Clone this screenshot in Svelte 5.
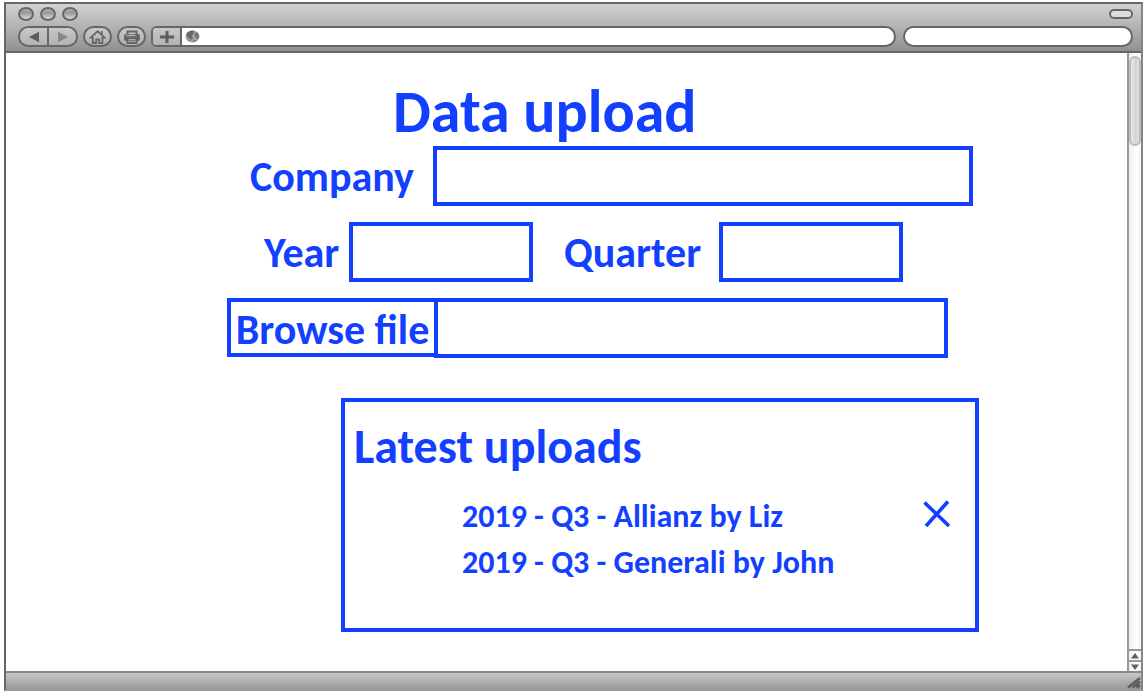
<script>
  let company = $state('');
  let year = $state('');
  let quarter = $state('');
  let file = $state('');
  const uploads = [
    { text: '2019 - Q3 - Allianz by Liz', removable: true },
    { text: '2019 - Q3 - Generali by John', removable: false }
  ];
</script>

<div class="page">
  <div class="window">
    <header class="chrome">
      <div class="titlebar">
        <div class="lights">
          <button class="light" aria-label="Close"></button>
          <button class="light" aria-label="Minimise"></button>
          <button class="light" aria-label="Zoom"></button>
        </div>
        <button class="pill" aria-label="Toggle toolbar"></button>
      </div>
      <nav class="toolbar" aria-label="Browser">
        <div class="history">
          <button class="tool" aria-label="Back">
            <svg width="12" height="12" viewBox="0 0 12 12"><path d="M1 6 11 .8v10.4z" fill="#5c5c5c" /></svg>
          </button>
          <button class="tool" aria-label="Forward">
            <svg width="12" height="12" viewBox="0 0 12 12"><path d="M11 6 1 .8v10.4z" fill="#888" /></svg>
          </button>
        </div>
        <button class="tool round" aria-label="Home">
          <svg width="17" height="16" viewBox="0 0 17 16" fill="none" stroke="#666" stroke-width="1.8">
            <path d="M3.800 8.600H1.800L8.600 2.200 15.600 8.600h-2.200M12.800 5.500V2M3.800 8v6h3.400v-3.700h2.800V14h3.400V8" />
          </svg>
        </button>
        <button class="tool round" aria-label="Print">
          <svg width="18" height="16" viewBox="0 0 18 16" fill="none">
            <path d="M4.500 6V2.500h9V6" stroke="#666" stroke-width="2" />
            <rect x="1" y="5" width="16" height="7" rx="2" fill="#666" />
            <path d="M3.500 6.500h9" stroke="#b0b0b0" stroke-width="1.400" />
            <rect x="4.500" y="9" width="9" height="5" fill="#aaa" stroke="#666" stroke-width="2" />
            <path d="M6 11.500h6" stroke="#777" />
          </svg>
        </button>
        <div class="address">
          <button class="tool add" aria-label="Add bookmark">
            <svg width="14" height="12" viewBox="0 0 14 12"><path d="M5.500 0h3v4.500H14v3H8.500V12h-3V7.500H0v-3h5.500z" fill="#5e5e5e" /></svg>
          </button>
          <svg class="globe" width="15" height="13" viewBox="0 0 15 13">
            <ellipse cx="7.500" cy="6.500" rx="7" ry="6" fill="#a2a2a2" />
            <path d="M1 4.500C2.500 1.500 5 .5 8 .5L9.500 2 8 3 8.500 4.500 6.500 6 8 8 6.500 10 5 8.500 3 8 2.500 6z" fill="#686868" />
            <path d="M10 3 12.500 2.500 14.200 5.500 13 9 11 8.200 9.800 5.500zM7.500 11 11.500 9.800 10 12z" fill="#737373" />
            <path d="M2 9 4.500 10 5 12z" fill="#777" />
          </svg>
          <input aria-label="Address" />
        </div>
        <input class="search" aria-label="Search" />
      </nav>
    </header>

    <div class="body">
      <main>
        <h1>Data upload</h1>
        <form onsubmit={(e) => e.preventDefault()}>
          <div class="row company">
            <label for="company">Company</label>
            <input id="company" class="box" bind:value={company} />
          </div>
          <div class="row period">
            <label for="year">Year</label>
            <input id="year" class="box" bind:value={year} />
            <label class="quarter" for="quarter">Quarter</label>
            <input id="quarter" class="box" bind:value={quarter} />
          </div>
          <div class="row browse">
            <button class="box" type="button">Browse file</button>
            <input class="box" aria-label="File" bind:value={file} />
          </div>
        </form>
        <section>
          <h2>Latest uploads</h2>
          <ul>
            {#each uploads as upload}
              <li>
                <span>{upload.text}</span>
                {#if upload.removable}
                  <button class="remove" aria-label="Remove upload">
                    <svg width="28" height="28" viewBox="0 0 28 28"><path d="M1.500 2.500 26 26M25 1.500 3 26" stroke="#133fff" stroke-width="3.600" /></svg>
                  </button>
                {/if}
              </li>
            {/each}
          </ul>
        </section>
      </main>
      <div class="scrollbar">
        <div class="track"><div class="thumb"></div></div>
        <button class="arrow" aria-label="Scroll up">
          <svg width="8" height="6" viewBox="0 0 8 6"><path d="M4 0 8 5.500H0z" fill="#606060" /></svg>
        </button>
        <button class="arrow" aria-label="Scroll down">
          <svg width="8" height="6" viewBox="0 0 8 6"><path d="M4 6 8 .5H0z" fill="#606060" /></svg>
        </button>
      </div>
    </div>

    <footer>
      <svg width="14" height="13" viewBox="0 0 14 13" stroke="#606060" stroke-width="2.800"><path d="M1 11.500 13 2M5.500 11.500 13 5.500M9.500 11.500 13 9" /></svg>
    </footer>
  </div>
</div>

<style>
  :global(body) {
    margin: 0;
    background: #fff;
  }
  .page, .page * {
    box-sizing: border-box;
  }
  .page {
    --blue: #133fff;
    --edge: #666;
    display: flex;
    min-height: 100vh;
    padding: 2px 5px 3px 4px;
    font-family: Carlito, Calibri, Lato, sans-serif;
    font-weight: 700;
    color: var(--blue);
  }
  button, input {
    margin: 0;
    padding: 0;
    border: 0;
    background: none;
    font: inherit;
    color: inherit;
    min-width: 0;
  }
  svg {
    display: block;
    flex: none;
  }
  .window {
    flex: 1;
    min-width: 0;
    display: flex;
    flex-direction: column;
    border: 2px solid var(--edge);
    border-right-color: #858585;
    border-bottom-color: #999;
  }
  .chrome {
    padding: 3px 8px 4px 12px;
    background: linear-gradient(#d2d2d2, #919191);
    border-bottom: 2px solid var(--edge);
  }
  .titlebar {
    display: flex;
    justify-content: space-between;
    align-items: center;
    height: 14px;
    margin-bottom: 5px;
  }
  .lights {
    display: flex;
    gap: 6px;
  }
  .light {
    width: 16px;
    height: 14px;
    border: 2px solid var(--edge);
    border-radius: 50%;
    background: linear-gradient(#aaa, #999 40%, #ddd);
  }
  .pill {
    width: 24px;
    height: 10px;
    border: 2px solid var(--edge);
    border-radius: 5px;
    background: #ddd;
  }
  .toolbar {
    display: flex;
    gap: 5px;
    height: 21px;
  }
  .history, .round, .address, .search {
    border: 2px solid var(--edge);
    border-radius: 11px;
  }
  .tool {
    display: flex;
    align-items: center;
    justify-content: center;
    background: linear-gradient(#c8c8c8, #b2b2b2);
  }
  .history {
    display: flex;
    width: 60px;
    overflow: hidden;
  }
  .history .tool {
    flex: 1;
  }
  .history .tool + .tool {
    border-left: 2px solid var(--edge);
  }
  .round {
    width: 29px;
  }
  .address {
    flex: 1;
    display: flex;
    align-items: center;
    overflow: hidden;
    margin-right: 2px;
    border-radius: 6px 11px 11px 6px;
    background: #fff;
  }
  .add {
    width: 29px;
    height: 100%;
    border-right: 2px solid var(--edge);
  }
  .globe {
    margin-left: 3px;
  }
  .address input {
    flex: 1;
    padding: 0 8px;
    font-size: 12px;
  }
  .search {
    width: 230px;
    padding: 0 8px;
    background: #fff;
    font-size: 12px;
  }
  .body {
    flex: 1;
    display: flex;
  }
  main {
    flex: 1;
    min-width: 0;
    padding: 24px 148px 39px 221px;
  }
  h1, h2, ul {
    margin: 0;
    padding: 0;
    font-weight: 700;
    white-space: nowrap;
  }
  h1 {
    padding-left: 166px;
    font-size: 60px;
    line-height: 69px;
  }
  form {
    display: flex;
    flex-direction: column;
    gap: 16px;
    font-size: 42px;
    white-space: nowrap;
  }
  .row {
    display: flex;
    align-items: center;
  }
  .box {
    height: 60px;
    border: 4px solid var(--blue);
    border-radius: 0;
  }
  input.box {
    flex: 1;
    padding: 0 8px;
  }
  .company {
    padding-right: 6px;
  }
  .company label {
    width: 206px;
    padding-left: 23px;
  }
  .period {
    padding-right: 76px;
  }
  .period label {
    width: 122px;
    padding-left: 37px;
  }
  .period .quarter {
    width: 186px;
    padding-left: 31px;
  }
  .browse {
    align-items: flex-start;
    padding-right: 31px;
  }
  .browse button {
    width: 211px;
    height: 59px;
    padding-top: 2px;
  }
  .browse input {
    margin-left: -4px;
  }
  section {
    margin: 40px 0 0 114px;
    padding: 13px 24px 42px 9px;
    border: 4px solid var(--blue);
  }
  h2 {
    margin-bottom: 15px;
    font-size: 48px;
    line-height: 64px;
  }
  ul {
    padding-left: 108px;
    list-style: none;
    font-size: 32px;
    line-height: 46px;
  }
  li {
    display: flex;
    justify-content: space-between;
    height: 46px;
  }
  .remove {
    align-self: flex-start;
    padding: 6px 0 6px 0;
  }
  .scrollbar {
    display: flex;
    flex-direction: column;
    width: 14px;
    border-left: 2px solid #999;
    background: linear-gradient(90deg, #eee, #fff 60%, #f4f4f4);
  }
  .track {
    flex: 1;
    padding-top: 3px;
  }
  .thumb {
    height: 90px;
    border: 2px solid #bbb;
    border-radius: 6px;
    background: linear-gradient(90deg, #e8e8e8, #d4d4d4 60%, #e4e4e4);
  }
  .arrow {
    display: flex;
    align-items: center;
    justify-content: center;
    height: 11px;
    border-top: 2px solid #999;
  }
  footer {
    display: flex;
    justify-content: flex-end;
    align-items: flex-end;
    height: 18px;
    border-top: 2px solid #888;
    background: linear-gradient(#c8c8c8, #999);
  }
</style>
